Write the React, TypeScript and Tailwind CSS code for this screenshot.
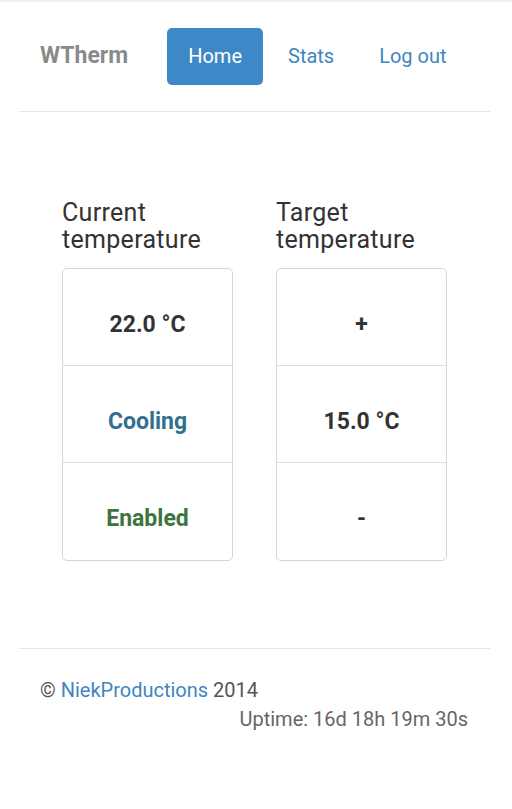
import React from 'react';

const Cell: React.FC<{ children: React.ReactNode; className?: string; last?: boolean }> = ({ children, className = '', last }) => (
  <div
    className={`flex h-[97px] items-center justify-center pt-[16px] text-[23px] font-bold ${last ? '' : 'border-b border-[#ddd]'} ${className}`}
  >
    {children}
  </div>
);

const App: React.FC = () => {
  return (
    <div className="min-h-[809px] bg-white border-t-2 border-[#f0f0f0] text-[#333]" style={{ fontFamily: 'Roboto, "Liberation Sans", sans-serif' }}>
      <div className="ml-[19px] w-[471px]">
        {/* nav */}
        <nav className="flex items-center h-[110px] pb-[1px] border-b border-[#e5e5e5]">
          <span className="ml-[21px] mr-[39px] text-[23px] font-bold text-[#8a8a8a]">WTherm</span>
          <a href="#" className="flex items-center h-[57px] px-[21px] rounded-[5px] bg-[#3f88c8] text-white text-[20px]">
            Home
          </a>
          <a href="#" className="ml-[2px] flex items-center h-[57px] pl-[23px] pr-[23px] text-[20px] text-[#3f86c0]">
            Stats
          </a>
          <a href="#" className="flex items-center h-[57px] pl-[22px] pr-[22px] text-[20px] text-[#3f86c0]">
            Log out
          </a>
        </nav>

        {/* main */}
        <main className="flex justify-center gap-[43px] pt-[87px] pb-[87px] border-b border-[#e5e5e5]">
          <section className="w-[171px]">
            <h2 className="text-[25px] leading-[27px] tracking-[0.3px] text-[#333]">Current temperature</h2>
            <div className="mt-[15px] rounded-[5px] border border-[#d6d6d6]">
              <Cell>22.0 °C</Cell>
              <Cell className="text-[#31708f]">Cooling</Cell>
              <Cell className="text-[#3c763d]" last>Enabled</Cell>
            </div>
          </section>
          <section className="w-[171px]">
            <h2 className="text-[25px] leading-[27px] tracking-[0.3px] text-[#333]">Target temperature</h2>
            <div className="mt-[15px] rounded-[5px] border border-[#d6d6d6]">
              <Cell>+</Cell>
              <Cell>15.0 °C</Cell>
              <Cell last>-</Cell>
            </div>
          </section>
        </main>

        {/* footer */}
        <footer className="pl-[21px] pr-[22px] pt-[27px] text-[20px] leading-[29px] text-[#555]">
          <p>
            © <a href="#" className="text-[#3f86c0]">NiekProductions</a> 2014
          </p>
          <p className="text-right text-[#666]">Uptime: 16d 18h 19m 30s</p>
        </footer>
      </div>
    </div>
  );
};

export default App;
